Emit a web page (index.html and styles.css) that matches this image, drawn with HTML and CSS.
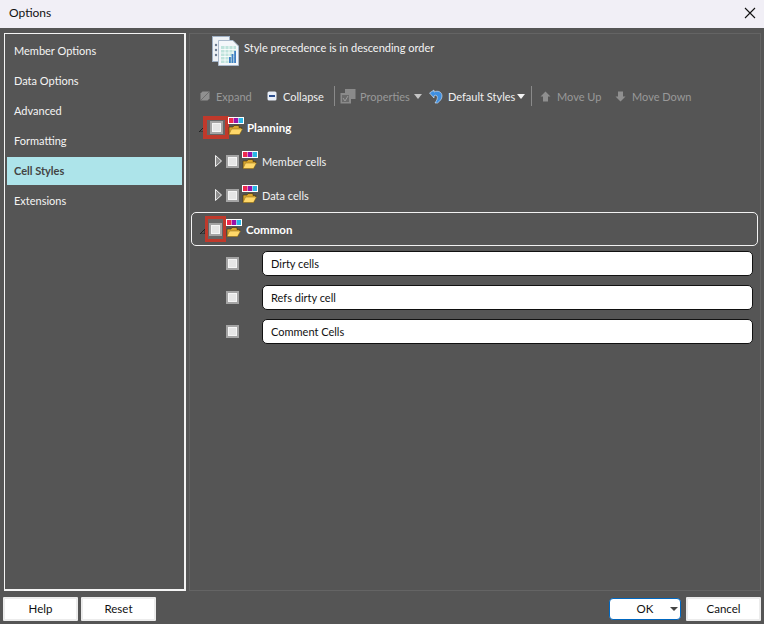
FILE: index.html
```html
<!DOCTYPE html>
<html lang="en">
<head>
<meta charset="utf-8">
<title>Options</title>
<link rel="stylesheet" href="styles.css">
</head>
<body>
<svg class="defs" width="0" height="0" aria-hidden="true">
  <symbol id="stylefolder" viewBox="0 0 16 18">
    <rect x="0" y="0" width="16" height="7" fill="#fff"/>
    <rect x="1" y="1" width="4.400" height="5" fill="#ee2a4e"/>
    <rect x="5.800" y="1" width="4.400" height="5" fill="#9a12a8"/>
    <rect x="10.600" y="1" width="4.400" height="5" fill="#29b6e6"/>
    <path d="M1 10 h4 l1 -1.500 h5 v2 h3 l-2.500 7 h-10.500z" fill="#d9a52e" stroke="#4a3a12" stroke-width="0.700"/>
    <path d="M3.500 12 h11 l-3 5.500 h-10.500z" fill="#ffd869" stroke="#8a6a1a" stroke-width="0.500"/>
  </symbol>
</svg>
<header class="titlebar">
  <span class="title">Options</span>
  <svg class="close" width="12" height="12" viewBox="0 0 12 12"><path d="M1 1 L11 11 M11 1 L1 11" stroke="#111" stroke-width="1.100" fill="none"/></svg>
</header>
<main class="main">
  <nav class="sidebar">
    <div class="navitem">Member Options</div>
    <div class="navitem">Data Options</div>
    <div class="navitem">Advanced</div>
    <div class="navitem">Formatting</div>
    <div class="navitem active">Cell Styles</div>
    <div class="navitem">Extensions</div>
  </nav>
  <section class="panel">
    <div class="info">
      <svg class="docicon" width="28" height="30" viewBox="0 0 28 30">
        <rect x="0.500" y="0.500" width="17" height="25" fill="#eef2f6" stroke="#9fb0c4"/>
        <circle cx="4" cy="9" r="1.200" fill="#6a7a90"/><circle cx="4" cy="14" r="1.200" fill="#6a7a90"/><circle cx="4" cy="19" r="1.200" fill="#6a7a90"/>
        <path d="M6.500 4.500 H21 L26.500 10 V29.500 H6.500z" fill="#f4f7fa" stroke="#a9b9cb"/>
        <rect x="9" y="10" width="15" height="17" fill="#bfe3dc"/>
        <path d="M9 13.500 H24 M9 17 H24 M9 20.500 H24 M9 24 H24 M13 10 V27 M17 10 V27 M21 10 V27" stroke="#fff" stroke-width="0.800"/>
        <rect x="17" y="21" width="1.800" height="6" fill="#3f7fc4"/><rect x="19.600" y="18" width="1.800" height="9" fill="#3f7fc4"/><rect x="22.200" y="15" width="1.800" height="12" fill="#3f7fc4"/>
      </svg>
      <span>Style precedence is in descending order</span>
    </div>
    <div class="toolbar">
      <span class="tool off w-expand"><svg width="10" height="10" viewBox="0 0 10 10"><path d="M2.500 0.500 H9.500 V7.500 L7.500 9.500 H0.500 V2.500z" fill="#909090"/><path d="M1 9 L9 1" stroke="#6e6e6e"/></svg>Expand</span>
      <span class="tool w-collapse"><svg width="10" height="10" viewBox="0 0 10 10"><rect x="0.500" y="0.500" width="9" height="9" rx="1.500" fill="#e8eef8"/><rect x="2" y="4" width="6" height="2" fill="#2c4f8f"/></svg>Collapse</span>
      <i class="sep"></i>
      <span class="tool off w-props"><svg width="16" height="16" viewBox="0 0 16 16"><path d="M5 1 H15.500 V11 H11 V15.500 H0.500 V5 H5z" fill="#8a8a8a"/><path d="M2 7 H9 V14 H2z" fill="#6a6a6a"/><path d="M3 10 L5 13 L8 8" stroke="#9a9a9a" fill="none"/></svg>Properties</span>
      <b class="caret off"></b>
      <span class="tool w-default"><svg width="14" height="16" viewBox="0 0 14 16"><path d="M0.500 5 L5 2 L5 4 C9 2 13 4 13 8 C13 11 11 13 8.500 15 L6 15 C8 12 9 10 8 8 C7 7 6 7 5 8 L5 10z" fill="#3f8fe0" stroke="#dfeeff" stroke-width="0.600"/></svg>Default Styles</span>
      <b class="caret"></b>
      <i class="sep second"></i>
      <span class="tool off w-up"><svg width="11" height="11" viewBox="0 0 11 11"><path d="M5.500 0.500 L10.500 5.500 H8 V10.500 H3 V5.500 H0.500z" fill="#8f8f8f"/></svg>Move Up</span>
      <span class="tool off w-down"><svg width="11" height="11" viewBox="0 0 11 11"><path d="M5.500 10.500 L10.500 5.500 H8 V0.500 H3 V5.500 H0.500z" fill="#8f8f8f"/></svg>Move Down</span>
    </div>
    <div class="tree">
      <div class="row group first">
        <svg class="twist" width="5" height="5" viewBox="0 0 5 5"><path d="M0 5 L5 0 V5z" fill="none" stroke="#222"/></svg>
        <span class="redbox wide"><i class="check"></i></span>
        <svg class="sicon" width="16" height="18"><use href="#stylefolder"/></svg>
        <span class="rowlabel strong">Planning</span>
      </div>
      <div class="row child">
        <svg class="arrow" width="7" height="12" viewBox="0 0 7 12"><path d="M0.500 0.500 L6.500 6 L0.500 11.500z" fill="#8c8c8c" stroke="#eee"/></svg>
        <i class="check"></i>
        <svg class="sicon" width="16" height="18"><use href="#stylefolder"/></svg>
        <span class="rowlabel">Member cells</span>
      </div>
      <div class="row child">
        <svg class="arrow" width="7" height="12" viewBox="0 0 7 12"><path d="M0.500 0.500 L6.500 6 L0.500 11.500z" fill="#8c8c8c" stroke="#eee"/></svg>
        <i class="check"></i>
        <svg class="sicon" width="16" height="18"><use href="#stylefolder"/></svg>
        <span class="rowlabel">Data cells</span>
      </div>
      <div class="row group outlined">
        <svg class="twist" width="5" height="5" viewBox="0 0 5 5"><path d="M0 5 L5 0 V5z" fill="none" stroke="#222"/></svg>
        <span class="redbox"><i class="check"></i></span>
        <svg class="sicon" width="16" height="18"><use href="#stylefolder"/></svg>
        <span class="rowlabel strong">Common</span>
      </div>
      <div class="row leaf"><i class="check"></i><span class="cellbox">Dirty cells</span></div>
      <div class="row leaf"><i class="check"></i><span class="cellbox">Refs dirty cell</span></div>
      <div class="row leaf"><i class="check"></i><span class="cellbox">Comment Cells</span></div>
    </div>
  </section>
</main>
<footer class="footer">
  <div class="btn">Help</div>
  <div class="btn">Reset</div>
  <div class="spacer"></div>
  <div class="btn primary"><span>OK</span><b class="okcaret"></b></div>
  <div class="btn">Cancel</div>
</footer>
</body>
</html>
```
FILE: styles.css
```css
* { box-sizing: border-box; }
html, body { margin: 0; height: 100%; }
body {
  width: 764px;
  height: 624px;
  overflow: hidden;
  background: #555555;
  color: #fff;
  font-family: Lato, Roboto, sans-serif;
  font-size: 11px;
  display: flex;
  flex-direction: column;
}
.defs { position: absolute; }
.titlebar {
  height: 28px;
  flex: none;
  background: #f1eff6;
  color: #111;
  display: flex;
  align-items: center;
  justify-content: space-between;
  padding: 0 8px 3px 9px;
  font-size: 12px;
}
.close { margin-top: 1px; }
.main {
  flex: none;
  height: 564px;
  display: flex;
  padding: 5px 3px 0 4px;
  gap: 3px;
}
.sidebar {
  width: 182px;
  height: 558px;
  border: 1px solid #f4f4f4;
  border-width: 1px 2px 2px 1px;
  padding: 2px 2px 2px;
}
.navitem {
  height: 30px;
  padding-left: 7px;
  padding-bottom: 1px;
  display: flex;
  align-items: center;
  color: #f4f4f4;
}
.navitem.active {
  background: #ade4ea;
  color: #444;
  font-weight: 700;
  height: 28px;
  margin: 1px 0;
}
.panel {
  flex: 1;
  height: 558px;
  border: 1px solid #646464;
  display: flex;
  flex-direction: column;
  padding-left: 1px;
}
.info {
  height: 33px;
  margin-top: 2px;
  padding-left: 21px;
  display: flex;
  align-items: flex-start;
  gap: 4px;
  color: #f4f4f4;
}
.info span { margin-top: 5px; }
.toolbar {
  height: 26px;
  margin-top: 14px;
  padding-left: 9px;
  display: flex;
  align-items: center;
  color: #f0f0f0;
}
.tool { display: inline-flex; align-items: center; gap: 6px; white-space: nowrap; }
.tool.off { color: #999; }
.w-expand { width: 67px; }
.w-collapse { width: 67px; }
.w-props { width: 74px; gap: 4px; }
.w-default { width: 88px; gap: 5px; }
.w-up { width: 75px; }
.sep { width: 1px; height: 20px; background: #8a8a8a; margin: 0 5px 0 0; }
.sep.second { margin: 0 8px 0 -1px; }
.caret {
  width: 0; height: 0;
  border-left: 4px solid transparent;
  border-right: 4px solid transparent;
  border-top: 5px solid #f4f4f4;
  margin-right: 7px;
}
.caret.off { border-top-color: #c4c4c4; }
.tree { margin-top: 1px; }
.row { height: 34px; display: flex; align-items: center; }
.first { padding-left: 8px; }
.group .twist { flex: none; margin-top: 5px; }
.group.first .redbox { margin-left: -1px; }
.rowlabel { color: #f2f2f2; margin-left: 4px; }
.first .rowlabel { margin-left: 3px; }
.rowlabel.strong { font-weight: 700; color: #fff; font-size: 11.500px; }
.redbox {
  width: 21px;
  height: 26px;
  border: 3px solid #c0392b;
  background: #666;
  display: flex;
  align-items: center;
  justify-content: center;
  flex: none;
}
.redbox.wide { width: 26px; height: 23px; border-width: 4px; }
.check {
  width: 13px;
  height: 13px;
  flex: none;
  display: block;
  background: #e6e6e6;
  border: 2px solid #a4a4a4;
  box-shadow: inset 0 0 0 1px #f5f5f5;
}
.sicon { flex: none; margin-top: -2px; }
.first .sicon { margin-left: -1px; }
.child { padding-left: 24px; }
.arrow { flex: none; margin-right: 4px; }
.child .sicon { margin-left: 3px; }
.outlined {
  border: 1px solid #f2f2f2;
  border-radius: 5px;
  margin: 0 2px 0 0;
  padding-left: 8px;
}
.leaf { padding-left: 35px; gap: 23px; }
.cellbox {
  width: 491px;
  height: 25px;
  background: #fff;
  color: #111;
  border: 1px solid #111;
  border-radius: 5px;
  display: flex;
  align-items: center;
  padding-left: 8px;
}
.footer {
  flex: 1;
  display: flex;
  gap: 3px;
  padding: 5px 3px 3px;
}
.spacer { flex: 1; }
.btn {
  width: 75px;
  height: 24px;
  padding-bottom: 1px;
  background: #fff;
  color: #111;
  border: 2px solid #ececec;
  display: flex;
  align-items: center;
  justify-content: center;
  border-radius: 1px;
  font-size: 11.500px;
}
.btn:nth-child(5) { margin-left: 2px; }
.btn.primary {
  width: 72px;
  height: 22px;
  margin-top: 1px;
  border: 1px solid #0067c0;
  border-radius: 4px;
  position: relative;
}
.okcaret {
  position: absolute;
  right: 2px;
  top: 8px;
  width: 0; height: 0;
  border-left: 4px solid transparent;
  border-right: 4px solid transparent;
  border-top: 4px solid #444;
}
```
